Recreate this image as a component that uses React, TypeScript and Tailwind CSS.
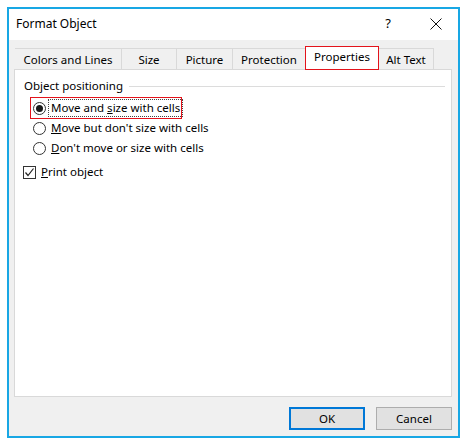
import React from "react";

const font = { fontFamily: '"Noto Sans", "Segoe UI", sans-serif' };

function Radio({ checked }: { checked?: boolean }) {
  return (
    <span className="flex h-[13px] w-[13px] shrink-0 items-center justify-center rounded-full border border-[#333] bg-white">
      {checked && <span className="h-[7px] w-[7px] rounded-full bg-[#1a1a1a]" />}
    </span>
  );
}

function Checkbox() {
  return (
    <span className="flex h-[13px] w-[13px] shrink-0 items-center justify-center border border-[#333] bg-white">
      <svg width="11" height="11" viewBox="0 0 11 11">
        <path d="M1.5 5.5 L4 8.5 L9.5 1.5" fill="none" stroke="#222" strokeWidth="1.2" />
      </svg>
    </span>
  );
}

const tabs = [
  { label: "Colors and Lines", w: "w-[106px]" },
  { label: "Size", w: "w-[55px]" },
  { label: "Picture", w: "w-[56px]" },
  { label: "Protection", w: "w-[73px]" },
  { label: "Properties", w: "w-[74px]", active: true },
  { label: "Alt Text", w: "w-[55px]" },
];

export default function App() {
  return (
    <div className="h-[447px] w-[469px] bg-white pl-[7px] pt-[7px] text-[11.5px] text-black" style={font}>
      <div className="flex h-[431px] w-[453px] flex-col border-2 border-[#18a7e4] bg-[#f0f0f0]">
        {/* title bar */}
        <div className="flex h-[31px] items-center bg-white pb-[2px] pl-[7px] pr-[16px] text-[12px]">
          <span className="flex-1">Format Object</span>
          <span className="mr-[39px] text-[13px]">?</span>
          <svg width="12" height="12" viewBox="0 0 12 12">
            <path d="M0.5 0.5 L11.5 11.5 M11.5 0.5 L0.5 11.5" stroke="#111" strokeWidth="1" />
          </svg>
        </div>

        <div className="flex flex-1 flex-col pl-[5px] pr-[6px] pt-[6px]">
          {/* tabs */}
          <div className="ml-px flex h-[23px] items-end">
            {tabs.map((t, i) =>
              t.active ? (
                <div
                  key={t.label}
                  className={`relative z-10 -mb-px flex h-[24px] items-center justify-center border border-[#e3131b] bg-white pb-[2px] ${t.w}`}
                >
                  {t.label}
                </div>
              ) : (
                <div
                  key={t.label}
                  className={`flex h-[21px] items-center justify-center border-t border-[#d9d9d9] pt-[1px] ${
                    i === 0 || i === 5 ? "" : "border-l"
                  } ${i === 5 ? "border-r" : ""} ${t.w}`}
                >
                  {t.label}
                </div>
              )
            )}
          </div>

          {/* panel */}
          <div className="flex h-[328px] flex-col border border-[#d9d9d9] bg-white pr-[6px]">
            <div className="mt-[8px] flex items-center pl-[9px]">
              <span className="leading-[16px]">Object positioning</span>
              <span className="ml-[6px] h-px flex-1 bg-[#dcdcdc]" />
            </div>

            <div className="mt-[4px] flex flex-col">
              <div className="relative flex h-[20px] items-center pl-[18px]">
                <span className="pointer-events-none absolute left-[15px] top-[-1px] h-[22px] w-[152px] border border-[#e3131b]" />
                <Radio checked />
                <span className="ml-[2px] border border-dotted border-[#444] px-[2px] leading-[16px]">
                  Move and <u>s</u>ize with cells
                </span>
              </div>
              <div className="flex h-[20px] items-center gap-[5px] pl-[18px]">
                <Radio />
                <span className="leading-[16px]">
                  <u>M</u>ove but don't size with cells
                </span>
              </div>
              <div className="flex h-[20px] items-center gap-[5px] pl-[18px]">
                <Radio />
                <span className="leading-[16px]">
                  <u>D</u>on't move or size with cells
                </span>
              </div>
            </div>

            <div className="mt-[4px] flex h-[20px] items-center gap-[5px] pl-[8px]">
              <Checkbox />
              <span className="leading-[16px]">
                <u>P</u>rint object
              </span>
            </div>
          </div>

          {/* buttons */}
          <div className="mt-[10px] flex justify-end gap-[11px]">
            <button className="h-[23px] w-[76px] border-2 border-[#0078d7] bg-[#e1e1e1]">OK</button>
            <button className="h-[23px] w-[76px] border border-[#adadad] bg-[#e1e1e1]">Cancel</button>
          </div>
        </div>
      </div>
    </div>
  );
}
